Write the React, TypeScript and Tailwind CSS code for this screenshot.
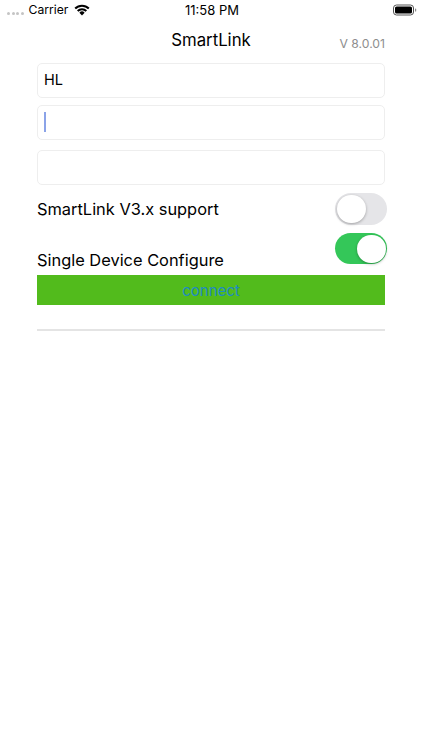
function Toggle({ on }: { on: boolean }) {
  return (
    <div
      className={`flex w-[52px] items-center rounded-full p-[1.5px] ${
        on ? 'h-[31px] justify-end bg-[#34c759]' : 'h-[32px] justify-start bg-[#e5e5e8]'
      }`}
    >
      <div className="h-[28px] w-[29px] rounded-full bg-white shadow-[0_1px_3px_rgba(0,0,0,0.3)]" />
    </div>
  );
}

function Field({ children, className = '' }: { children?: React.ReactNode; className?: string }) {
  return (
    <div className={`flex h-[35px] items-center rounded-[5px] border border-[#eeeeee] bg-white px-[6px] pb-[2px] text-[14.5px] text-black ${className}`}>
      {children}
    </div>
  );
}

export default function App() {
  return (
    <div className="h-[750px] w-[422px] overflow-hidden bg-white font-['Inter',sans-serif] text-black">
      {/* Status bar */}
      <div className="flex h-[20px] items-center justify-between pl-[7px] pr-[5px] text-[13px] leading-none">
        <div className="flex w-[140px] items-center">
          <div className="mt-[7px] flex gap-[1.5px]">
            <span className="h-[3px] w-[3px] rounded-full bg-[#c4c4c4]" />
            <span className="h-[3px] w-[3px] rounded-full bg-[#c4c4c4]" />
            <span className="h-[3px] w-[3px] rounded-full bg-[#c4c4c4]" />
            <span className="h-[3px] w-[3px] rounded-full bg-[#c4c4c4]" />
          </div>
          <span className="ml-[5px] mt-[1px] text-[12.2px]">Carrier</span>
          <svg className="ml-[6px]" width="16" height="12" viewBox="0 0 16 12">
            <path d="M8 11.5 5.4 8.7a3.6 3.6 0 0 1 5.2 0L8 11.5Z" fill="#000" />
            <path d="M3.7 7a6 6 0 0 1 8.6 0" fill="none" stroke="#000" strokeWidth="2" />
            <path d="M1.2 4.5a9.5 9.5 0 0 1 13.6 0" fill="none" stroke="#000" strokeWidth="2" />
          </svg>
        </div>
        <span>11:58 PM</span>
        <div className="flex w-[140px] justify-end">
          <svg width="24" height="12" viewBox="0 0 24 12">
            <rect x="0.5" y="1" width="20" height="10" rx="3" fill="none" stroke="#555" strokeWidth="1" />
            <rect x="2" y="2.5" width="17" height="7" rx="1.6" fill="#000" />
            <rect x="22" y="4.5" width="1.2" height="3" rx="0.6" fill="#888" />
          </svg>
        </div>
      </div>

      <div className="px-[37px]">
        {/* Title row */}
        <div className="relative flex h-[43px] items-center justify-center pb-[2px] text-[16.8px]">
          <span>SmartLink</span>
          <span className="absolute right-0 top-[18px] text-[12.2px] leading-none text-[#8e8e8e]">V 8.0.01</span>
        </div>

        <Field>HL</Field>
        <Field className="mt-[7px]">
          <span className="h-[20px] w-[2px] bg-[#8ba3e8]" />
        </Field>
        <Field className="mt-[10px]" />

        <div className="-mr-[2px] mt-[8px] flex h-[32px] items-center justify-between text-[16.4px]">
          <span className="mt-[1px]">SmartLink V3.x support</span>
          <Toggle on={false} />
        </div>
        <div className="relative -mr-[2px] mt-[8px] flex h-[31px] justify-between text-[16.4px]">
          <span className="mt-[15px] leading-[24px]">Single Device Configure</span>
          <Toggle on />
        </div>

        <div className="mt-[11px] flex h-[30px] items-center justify-center bg-[#52bb1c] pt-[2px] text-[15px] text-[#1f8ac4]">
          connect
        </div>
        <div className="mt-[24px] h-[2px] bg-[#e4e4e4]" />
      </div>
    </div>
  );
}
